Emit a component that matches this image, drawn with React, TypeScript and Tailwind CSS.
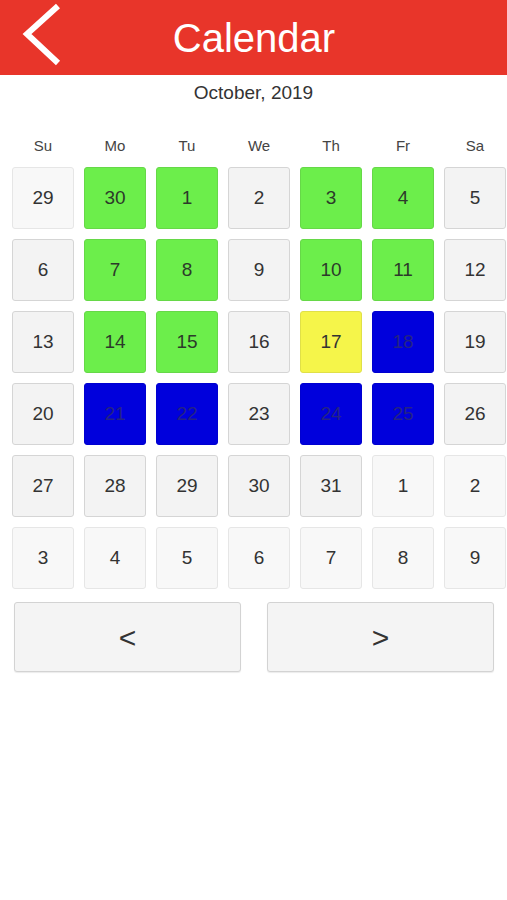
import React from "react";

type Kind = "o" | "n" | "g" | "y" | "b";

const rows: [string, Kind][][] = [
  [["29", "o"], ["30", "g"], ["1", "g"], ["2", "n"], ["3", "g"], ["4", "g"], ["5", "n"]],
  [["6", "n"], ["7", "g"], ["8", "g"], ["9", "n"], ["10", "g"], ["11", "g"], ["12", "n"]],
  [["13", "n"], ["14", "g"], ["15", "g"], ["16", "n"], ["17", "y"], ["18", "b"], ["19", "n"]],
  [["20", "n"], ["21", "b"], ["22", "b"], ["23", "n"], ["24", "b"], ["25", "b"], ["26", "n"]],
  [["27", "n"], ["28", "n"], ["29", "n"], ["30", "n"], ["31", "n"], ["1", "o"], ["2", "o"]],
  [["3", "o"], ["4", "o"], ["5", "o"], ["6", "o"], ["7", "o"], ["8", "o"], ["9", "o"]],
];

const kindClass: Record<Kind, string> = {
  o: "bg-[#f8f8f8] border border-[#e6e6e6] text-[#333333]",
  n: "bg-[#f3f3f3] border border-[#d5d5d5] text-[#333333]",
  g: "bg-[#6cee4b] border border-[#66d848] text-[#2c3a2a]",
  y: "bg-[#f5f54a] border border-[#e0e048] text-[#333333]",
  b: "bg-[#0000dc] border border-[#0000d0] text-[#232385]",
};

const days = ["Su", "Mo", "Tu", "We", "Th", "Fr", "Sa"];

export default function App() {
  return (
    <div
      className="w-[507px] h-[900px] bg-white flex flex-col"
      style={{ fontFamily: '"Liberation Sans", Arial, sans-serif' }}
    >
      <div className="h-[75px] bg-[#e8352a] flex items-center relative">
        <svg
          className="absolute left-[18px] top-0"
          width="50"
          height="70"
          viewBox="0 0 50 70"
        >
          <path
            d="M40 6 L9 34 L40 63"
            fill="none"
            stroke="#ffffff"
            strokeWidth="6"
            strokeLinecap="butt"
            strokeLinejoin="miter"
          />
        </svg>
        <div className="w-full text-center text-white text-[40px] leading-none pl-[1px]">
          Calendar
        </div>
      </div>

      <div className="pt-[6px] text-center text-[19px] leading-[24px] text-[#333333]">
        October, 2019
      </div>

      <div className="mt-[31px] pl-[12px] grid grid-cols-[repeat(7,62px)] gap-x-[10px]">
        {days.map((d) => (
          <div key={d} className="text-center text-[15px] leading-[20px] text-[#444444]">
            {d}
          </div>
        ))}
      </div>

      <div className="mt-[11px] pl-[12px] grid grid-cols-[repeat(7,62px)] auto-rows-[62px] gap-[10px]">
        {rows.flat().map(([n, k], i) => (
          <div
            key={i}
            className={`rounded-[3px] flex items-center justify-center text-[19px] ${kindClass[k]}`}
          >
            {n}
          </div>
        ))}
      </div>

      <div className="mt-[13px] pl-[14px] flex gap-[26px]">
        <button className="w-[227px] h-[70px] bg-[#f4f4f4] border border-[#d3d3d3] rounded-[3px] shadow-[0_1px_1px_rgba(0,0,0,0.08)] text-[30px] text-[#333333] flex items-center justify-center">
          &lt;
        </button>
        <button className="w-[227px] h-[70px] bg-[#f4f4f4] border border-[#d3d3d3] rounded-[3px] shadow-[0_1px_1px_rgba(0,0,0,0.08)] text-[30px] text-[#333333] flex items-center justify-center">
          &gt;
        </button>
      </div>
    </div>
  );
}
